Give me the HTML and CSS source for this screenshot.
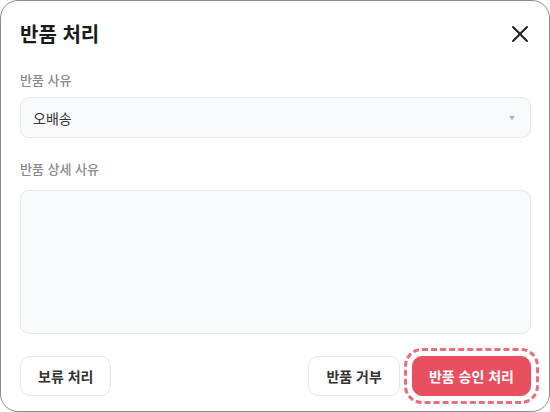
FILE: index.html
```html
<!DOCTYPE html>
<html lang="ko">
<head>
  <meta charset="UTF-8" />
  <meta name="viewport" content="width=device-width, initial-scale=1.0"/>
  <title>반품 처리</title>
  <link rel="stylesheet" href="styles.css">
</head>
<body>
  <div class="dialog">
    <div class="dialog-header">
      <h1>반품 처리</h1>
      <button class="close-btn" aria-label="닫기">
        <svg width="18" height="18" viewBox="0 0 18 18">
          <path d="M2 2 L16 16 M16 2 L2 16" stroke="#222" stroke-width="2" stroke-linecap="round" fill="none"/>
        </svg>
      </button>
    </div>

    <div class="field">
      <label class="field-label">반품 사유</label>
      <div class="select-box">
        <span>오배송</span>
        <span class="caret"></span>
      </div>
    </div>

    <div class="field">
      <label class="field-label">반품 상세 사유</label>
      <div class="textarea-box"></div>
    </div>

    <div class="dialog-footer">
      <button class="btn">보류 처리</button>
      <div class="footer-right">
        <button class="btn">반품 거부</button>
        <button class="btn btn-primary">반품 승인 처리</button>
      </div>
    </div>
  </div>
</body>
</html>
```

FILE: styles.css
```css
* {
  box-sizing: border-box;
}

body {
  margin: 0;
  background: #fff;
  font-family: 'Noto Sans CJK KR', 'Noto Sans', sans-serif;
  color: #222;
}

.dialog {
  width: 550px;
  height: 412px;
  border: 1px solid #8c8c8c;
  border-radius: 18px;
  background: #fff;
  padding: 18px 18px 15px 19px;
  display: flex;
  flex-direction: column;
}

.dialog-header {
  display: flex;
  align-items: center;
  justify-content: space-between;
  height: 30px;
}

.dialog-header h1 {
  margin: 0;
  font-size: 20px;
  font-weight: 700;
  color: #1a1a1a;
  line-height: 30px;
}

.close-btn {
  border: none;
  background: none;
  padding: 0;
  width: 20px;
  height: 20px;
  display: flex;
  align-items: center;
  justify-content: center;
  margin-right: 1px;
  cursor: pointer;
}

.field {
  display: flex;
  flex-direction: column;
  margin-top: 22px;
}

.field-label {
  font-size: 13px;
  line-height: 18px;
  color: #8a8a8a;
  font-weight: 500;
  margin-bottom: 8px;
}

.field + .field .field-label {
  margin-bottom: 12px;
}

.select-box {
  height: 41px;
  border: 1px solid #e6e8eb;
  border-radius: 9px;
  background: #f8fafc;
  display: flex;
  align-items: center;
  justify-content: space-between;
  padding: 0 15px 0 12px;
  font-size: 14px;
  color: #333;
}

.caret {
  width: 0;
  height: 0;
  border-left: 3.5px solid transparent;
  border-right: 3.5px solid transparent;
  border-top: 4px solid #b0b0b0;
}

.textarea-box {
  height: 144px;
  border: 1px solid #e6e8eb;
  border-radius: 9px;
  background: #f8fafc;
}

.dialog-footer {
  margin-top: auto;
  display: flex;
  justify-content: space-between;
  align-items: center;
}

.footer-right {
  display: flex;
  gap: 12px;
}

.btn {
  height: 40px;
  padding: 0 17px;
  border: 1px solid #e6e8eb;
  border-radius: 10px;
  background: #fff;
  font-family: inherit;
  font-size: 14px;
  font-weight: 700;
  color: #333;
  cursor: pointer;
}

.btn-primary {
  background: #e8505f;
  border-color: #e8505f;
  color: #fff;
  padding: 0 16px;
  outline: 3px dashed rgba(226, 86, 100, 0.85);
  outline-offset: 5px;
}
```
